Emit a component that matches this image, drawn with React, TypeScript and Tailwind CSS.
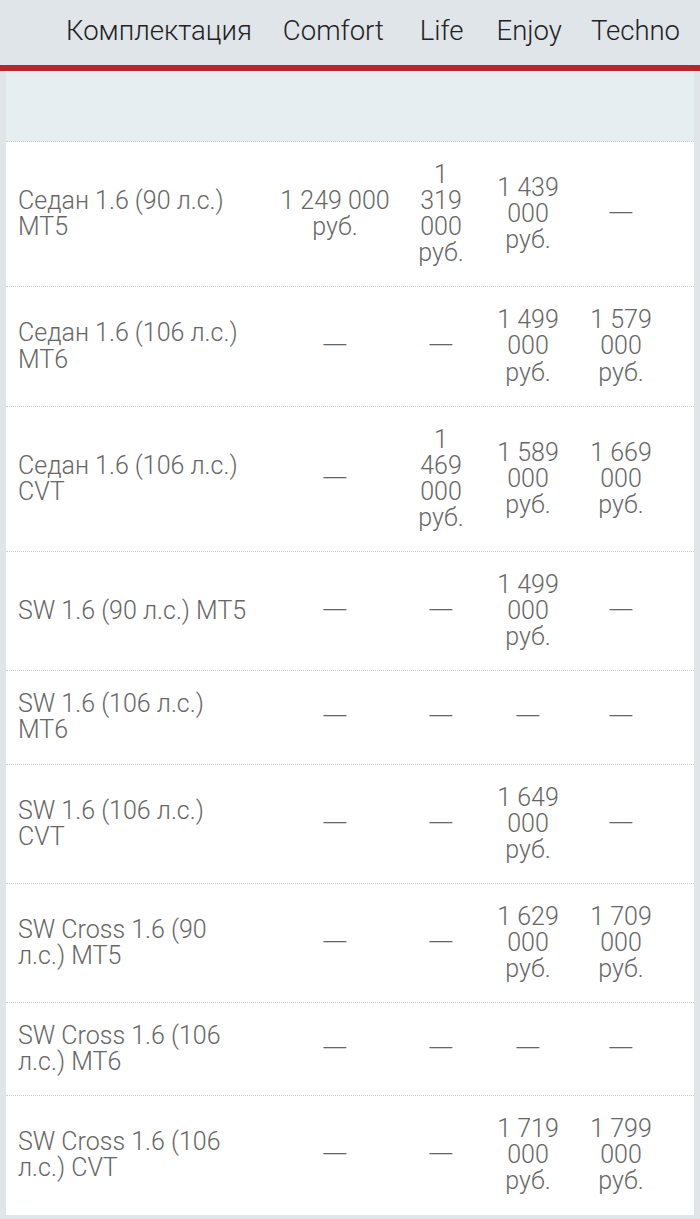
import React from 'react';

type Row = {
  name: string;
  prices: (string | null)[];
};

const rows: Row[] = [
  { name: 'Седан 1.6 (90 л.с.) MT5', prices: ['1 249 000 руб.', '1 319 000 руб.', '1 439 000 руб.', null] },
  { name: 'Седан 1.6 (106 л.с.) MT6', prices: [null, null, '1 499 000 руб.', '1 579 000 руб.'] },
  { name: 'Седан 1.6 (106 л.с.) CVT', prices: [null, '1 469 000 руб.', '1 589 000 руб.', '1 669 000 руб.'] },
  { name: 'SW 1.6 (90 л.с.) MT5', prices: [null, null, '1 499 000 руб.', null] },
  { name: 'SW 1.6 (106 л.с.) MT6', prices: [null, null, null, null] },
  { name: 'SW 1.6 (106 л.с.) CVT', prices: [null, null, '1 649 000 руб.', null] },
  { name: 'SW Cross 1.6 (90 л.с.) MT5', prices: [null, null, '1 629 000 руб.', '1 709 000 руб.'] },
  { name: 'SW Cross 1.6 (106 л.с.) MT6', prices: [null, null, null, null] },
  { name: 'SW Cross 1.6 (106 л.с.) CVT', prices: [null, null, '1 719 000 руб.', '1 799 000 руб.'] },
];

// inner widths force the same wrapping as the original table columns
const priceWidths = ['w-[120px]', 'w-[56px]', 'w-[66px]', 'w-[66px]'];

const PriceCell: React.FC<{ value: string | null; width: string; extra?: string }> = ({ value, width, extra }) => (
  <div className={`flex justify-center ${extra ?? ''}`}>
    <div className={`${width} text-center`}>
      {value ?? <span className="inline-block scale-x-[1.4]">—</span>}
    </div>
  </div>
);

export default function App() {
  return (
    <div className="w-[700px] min-h-[1219px] bg-[#dfe5e9] font-['Roboto',sans-serif]">
      <div className="h-[65px] flex items-center pb-1 pl-[66px] text-[27.5px] font-light text-[#222]">
        <span>Комплектация</span>
        <span className="ml-[31px]">Comfort</span>
        <span className="ml-[36px]">Life</span>
        <span className="ml-[33px]">Enjoy</span>
        <span className="ml-[29px]">Techno</span>
      </div>
      <div className="h-[6px] bg-[#b8262d]" />
      <div className="mx-[6px] pb-[4px]">
        <div className="h-[71px] bg-[#e7eef1] border-b border-dotted border-[#c5ccd1]" />
        <div className="bg-white text-[25px] leading-[26.1px] font-light text-[#666]">
          {rows.map((row) => (
            <div
              key={row.name}
              className="grid grid-cols-[266px_126px_86px_88px_1fr] items-center py-5 border-b border-dotted border-[#c5ccd1] last:border-b-0"
            >
              <div className="pl-3 pr-5">{row.name}</div>
              {row.prices.map((p, i) => (
                <PriceCell key={i} value={p} width={priceWidths[i]} extra={i === 3 ? 'pr-6' : ''} />
              ))}
            </div>
          ))}
        </div>
      </div>
    </div>
  );
}
